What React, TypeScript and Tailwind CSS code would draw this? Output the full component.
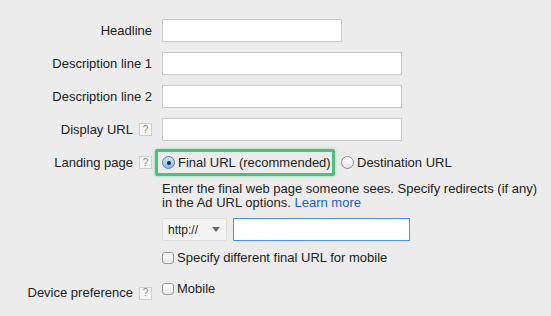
import type { ReactNode } from "react"

function Help() {
  return (
    <span className="flex h-[13px] w-[13px] items-center justify-center border border-[#cfcfcf] bg-[#f7f7f7] text-[10px] leading-none text-[#8a8a8a]">
      ?
    </span>
  )
}

function Label({ children, help }: { children: ReactNode; help?: boolean }) {
  return (
    <div className="flex w-[152px] shrink-0 items-center justify-end gap-[6px] whitespace-nowrap">
      <span>{children}</span>
      {help && <Help />}
    </div>
  )
}

function TextRow({ label, help, width }: { label: string; help?: boolean; width: string }) {
  return (
    <div className="mb-[10px] flex h-[23px] items-center">
      <Label help={help}>{label}</Label>
      <div className={`ml-[10px] h-[23px] border border-[#c9c9c9] bg-white ${width}`} />
    </div>
  )
}

function Radio({ checked }: { checked?: boolean }) {
  return checked ? (
    <span className="flex h-[13px] w-[13px] shrink-0 items-center justify-center rounded-full border border-[#5a7fae] bg-gradient-to-b from-[#d6e6f8] to-[#8fb4e2]">
      <span className="h-[4px] w-[4px] rounded-full bg-[#1b2a3d]" />
    </span>
  ) : (
    <span className="h-[13px] w-[13px] shrink-0 rounded-full border border-[#8d8d8d] bg-gradient-to-b from-white to-[#e6e6e6]" />
  )
}

function Checkbox() {
  return (
    <span className="h-[12px] w-[12px] shrink-0 rounded-[3px] border border-[#9a9a9a] bg-gradient-to-b from-white to-[#e8e8e8]" />
  )
}

export default function App() {
  return (
    <div className="h-[316px] w-[551px] overflow-hidden bg-[#ececec] pt-[19px] font-['Liberation_Sans',Arial,sans-serif] text-[13px] leading-[14px] text-[#222]">
      <TextRow label="Headline" width="w-[180px]" />
      <TextRow label="Description line 1" width="w-[240px]" />
      <TextRow label="Description line 2" width="w-[240px]" />
      <div className="mb-[8px] flex h-[23px] items-center">
        <Label help>Display URL</Label>
        <div className="ml-[10px] h-[23px] w-[240px] border border-[#c9c9c9] bg-white" />
      </div>

      <div className="flex items-start">
        <div className="flex h-[27px] items-center">
          <Label help>Landing page</Label>
        </div>
        <div className="ml-[10px] flex flex-col">
          <div className="flex h-[27px] items-center">
            <div className="-ml-[7px] flex h-[27px] w-[180px] items-center gap-[3px] rounded-[2px] border-[3px] border-[#4fbf7d] px-[4px] shadow-[0_0_3px_#7fd3a0]">
              <Radio checked />
              <span className="whitespace-nowrap">Final URL (recommended)</span>
            </div>
            <div className="ml-[6px] flex items-center gap-[3px]">
              <Radio />
              <span className="whitespace-nowrap">Destination URL</span>
            </div>
          </div>

          <p className="mt-[6px] whitespace-nowrap">
            Enter the final web page someone sees. Specify redirects (if any)
            <br />
            in the Ad URL options. <span className="text-[#1a5fd0]">Learn more</span>
          </p>

          <div className="mt-[8px] flex items-center gap-[6px]">
            <div className="flex h-[23px] w-[65px] items-center justify-between rounded-[2px] border border-[#dedede] bg-[#f4f4f4] pl-[5px] pr-[6px] text-[12px] text-[#222]">
              <span>http://</span>
              <span className="h-0 w-0 border-x-[4px] border-t-[5px] border-x-transparent border-t-[#666]" />
            </div>
            <div className="h-[23px] w-[177px] border border-[#4d90fe] bg-white" />
          </div>

          <div className="mt-[10px] flex h-[14px] items-center gap-[3px]">
            <Checkbox />
            <span className="whitespace-nowrap">Specify different final URL for mobile</span>
          </div>
        </div>
      </div>

      <div className="mt-[17px] flex items-start">
        <div className="mt-[4px] flex h-[14px] items-center">
          <Label help>Device preference</Label>
        </div>
        <div className="ml-[10px] flex h-[14px] items-center gap-[3px]">
          <Checkbox />
          <span>Mobile</span>
        </div>
      </div>
    </div>
  )
}
